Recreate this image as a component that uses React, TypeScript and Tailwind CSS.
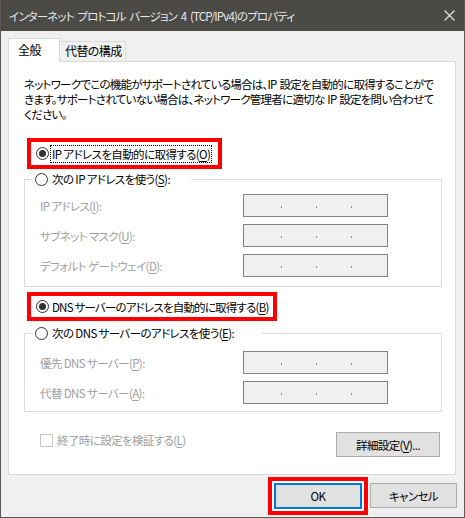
import type { ReactNode } from 'react';

const JP = "font-['Noto_Sans_CJK_JP','Noto_Sans',sans-serif] [font-feature-settings:'palt']";

function Radio({ checked }: { checked?: boolean }) {
  return (
    <span className="w-[13px] h-[13px] shrink-0 rounded-full border border-[#333] bg-white flex items-center justify-center">
      {checked && <span className="w-[7px] h-[7px] rounded-full bg-[#333]" />}
    </span>
  );
}

function IpBox() {
  return (
    <div className="w-[145px] h-[23px] border border-[#838383] bg-[#f0f0f0] flex items-center">
      <div className="ml-[37px] flex gap-[34px] mt-[2px]">
        <span className="w-[1px] h-[2px] bg-[#8a8a8a]" />
        <span className="w-[1px] h-[2px] bg-[#8a8a8a]" />
        <span className="w-[1px] h-[2px] bg-[#8a8a8a]" />
      </div>
    </div>
  );
}

function Field({ label }: { label: ReactNode }) {
  return (
    <div className="flex items-center h-[23px] pl-[15px]">
      <div className="w-[203px] text-[#a0a0a0] whitespace-nowrap">{label}</div>
      <IpBox />
    </div>
  );
}

function U({ children }: { children: ReactNode }) {
  return <span className="underline underline-offset-2">{children}</span>;
}

export default function App() {
  return (
    <div className={`w-[465px] h-[518px] bg-[#f0f0f0] border-x border-b border-[#595959] flex flex-col text-[11.5px] leading-[14px] tracking-[-0.6px] text-black ${JP}`}>
      {/* title bar */}
      <div className="h-[31px] bg-[#4b4a47] flex items-center justify-between pl-[8px] pr-[9px] shrink-0">
        <span className="text-[#e8e8e8] whitespace-nowrap tracking-[-0.85px] [word-spacing:2px]">インターネット プロトコル バージョン 4 (TCP/IPv4)のプロパティ</span>
        <svg width="11" height="11" viewBox="0 0 11 11" className="mt-[-1px]">
          <path d="M0.5 0.5 L10.5 10.5 M10.5 0.5 L0.5 10.5" stroke="#e8e8e8" strokeWidth="1.1" />
        </svg>
      </div>

      <div className="pl-[7px] pt-[7px]">
        {/* tabs */}
        <div className="flex items-end h-[23px]">
          <div className="relative z-10 w-[52px] h-[24px] -mb-px bg-white border border-b-0 border-[#d9d9d9] pl-[9px] pt-[4px] text-[12px]">
            全般
          </div>
          <div className="-ml-px w-[67px] h-[20px] bg-[#f0f0f0] border border-b-0 border-[#d9d9d9] pl-[5px] pt-[2px] whitespace-nowrap text-[12px]">
            代替の構成
          </div>
        </div>

        {/* panel */}
        <div className="w-[448px] h-[414px] bg-white border border-[#d9d9d9] pl-[15px] pt-[15px] flex flex-col items-start">
          <p className="whitespace-nowrap leading-[15px] tracking-[-0.75px] [word-spacing:1px]">
            ネットワークでこの機能がサポートされている場合は、IP 設定を自動的に取得することがで
            <br />
            きます。サポートされていない場合は、ネットワーク管理者に適切な IP 設定を問い合わせて
            <br />
            ください。
          </p>

          <div className="ml-[3px] mt-[16px] w-[195px] h-[31px] border-4 border-[#ff0000] flex items-center pl-[5px]">
            <Radio checked />
            <span className="ml-[1px] px-[1px] py-[1px] border border-dotted border-black whitespace-nowrap">
              IP アドレスを自動的に取得する(<U>O</U>)
            </span>
          </div>

          <fieldset className="mt-[3px] w-[418px] border border-[#dcdcdc] p-0 pt-[8px] pb-[9px] flex flex-col gap-[7px]">
            <legend className="ml-[8px] w-[158px] pl-[2px] flex items-center gap-[4px] whitespace-nowrap">
              <Radio />
              <span>次の IP アドレスを使う(<U>S</U>):</span>
            </legend>
            <Field label={<>IP アドレス(<U>I</U>):</>} />
            <Field label={<>サブネット マスク(<U>U</U>):</>} />
            <Field label={<>デフォルト ゲートウェイ(<U>D</U>):</>} />
          </fieldset>

          <div className="ml-[3px] mt-[5px] w-[250px] h-[29px] border-4 border-[#ff0000] flex items-center pl-[5px] gap-[3px] whitespace-nowrap tracking-[-0.8px]">
            <Radio checked />
            <span>DNS サーバーのアドレスを自動的に取得する(<U>B</U>)</span>
          </div>

          <fieldset className="mt-[5px] w-[418px] border border-[#dcdcdc] p-0 pt-[11px] pb-[7px] flex flex-col gap-[7px]">
            <legend className="ml-[8px] w-[229px] pl-[2px] flex items-center gap-[4px] whitespace-nowrap">
              <Radio />
              <span>次の DNS サーバーのアドレスを使う(<U>E</U>):</span>
            </legend>
            <Field label={<>優先 DNS サーバー(<U>P</U>):</>} />
            <Field label={<>代替 DNS サーバー(<U>A</U>):</>} />
          </fieldset>

          <div className="mt-[20px] w-[418px] pl-[16px] pr-[2px] flex items-start justify-between">
            <div className="flex items-center gap-[4px] mt-[1px] text-[#a0a0a0] whitespace-nowrap">
              <span className="w-[13px] h-[13px] border border-[#c6c6c6] bg-white" />
              <span>終了時に設定を検証する(<U>L</U>)</span>
            </div>
            <button className="w-[104px] h-[25px] bg-[#e1e1e1] border border-[#adadad] whitespace-nowrap">
              詳細設定(<U>V</U>)...
            </button>
          </div>
        </div>
      </div>

      {/* bottom buttons */}
      <div className="flex-1 flex items-center justify-end pr-[7px] gap-[2px] pb-[1px]">
        <div className="w-[100px] h-[38px] border-4 border-[#ff0000] bg-white flex items-center justify-center">
          <button className="w-[88px] h-[26px] bg-[#e1e1e1] border-2 border-[#0078d7]">OK</button>
        </div>
        <button className="w-[87px] h-[25px] bg-[#e1e1e1] border border-[#adadad]">キャンセル</button>
      </div>
    </div>
  );
}
